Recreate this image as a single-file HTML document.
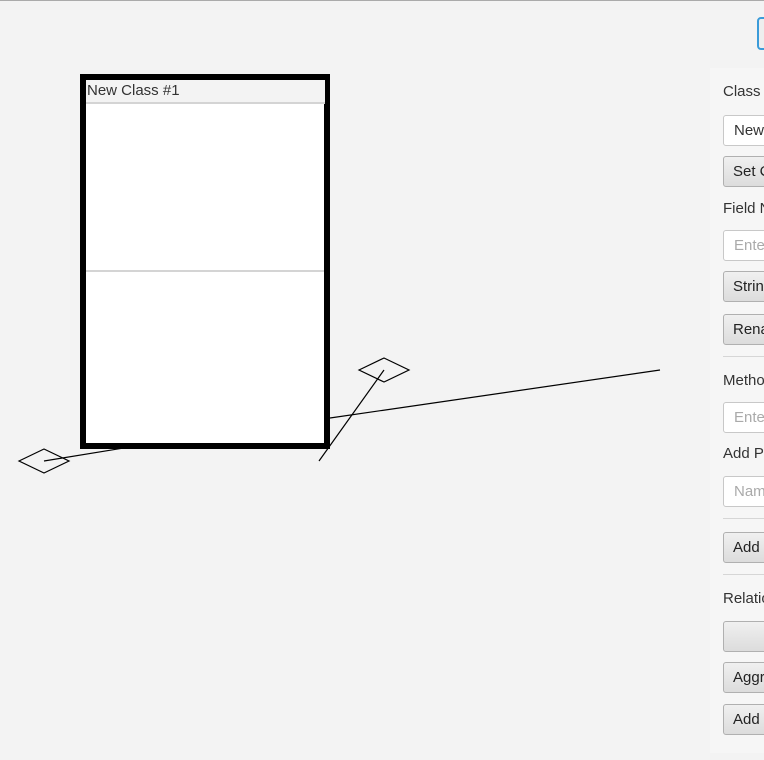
<html><head><style>
body{margin:0;width:764px;height:760px;background:#f3f3f3;position:relative;overflow:hidden;font-family:"Liberation Sans",sans-serif;font-size:15px;color:#333}
.a{position:absolute}
.tf{position:absolute;left:723px;width:60px;height:31px;background:#fff;border:1px solid #c8c8c8;border-radius:3px;box-sizing:border-box;padding:6px 0 0 10px;white-space:nowrap}
.bt{position:absolute;left:723px;width:60px;height:31px;background:linear-gradient(#f0f0f0,#dcdcdc);border:1px solid #b0b0b0;border-radius:3px;box-sizing:border-box;padding:6px 0 0 9px;white-space:nowrap;color:#222}
.lb{position:absolute;left:723px;white-space:nowrap}
.sp{position:absolute;left:723px;width:50px;height:1px;background:#d6d6d6}
</style></head><body>
<div class="a" style="left:0;top:0;width:764px;height:1px;background:#aaa"></div>
<div class="a" style="left:757px;top:17px;width:20px;height:33px;border:2px solid #3a9bd9;border-radius:4px;box-sizing:border-box;background:#eee"></div>
<div class="a" style="left:710px;top:68px;width:60px;height:685px;background:#f6f6f6"></div>
<div class="lb" style="top:83px">Class N</div>
<div class="tf" style="top:115px">New</div>
<div class="bt" style="top:156px">Set C</div>
<div class="lb" style="top:200px">Field N</div>
<div class="tf" style="top:230px;color:#aaa">Enter</div>
<div class="bt" style="top:271px">Strin</div>
<div class="bt" style="top:314px">Rena</div>
<div class="sp" style="top:356px"></div>
<div class="lb" style="top:372px">Metho</div>
<div class="tf" style="top:402px;color:#aaa">Enter</div>
<div class="lb" style="top:445px">Add P</div>
<div class="tf" style="top:476px;color:#aaa">Nam</div>
<div class="sp" style="top:518px"></div>
<div class="bt" style="top:532px">Add</div>
<div class="sp" style="top:574px"></div>
<div class="lb" style="top:590px">Relatio</div>
<div class="bt" style="top:621px"></div>
<div class="bt" style="top:662px">Aggr</div>
<div class="bt" style="top:704px">Add</div>
<div class="a" style="left:80px;top:74px;width:250px;height:375px;border:6px solid #000;box-sizing:border-box;background:#fff"></div>
<div class="a" style="left:86px;top:80px;width:238px;height:22px;background:#f3f3f3;border-bottom:2px solid #d4d4d4;padding-left:1px;line-height:22px;color:#333">New Class #1</div>
<div class="a" style="left:86px;top:270px;width:238px;height:2px;background:#d4d4d4"></div>
<svg class="a" style="left:0;top:0" width="764" height="760"><g stroke="#000" stroke-width="1.2" fill="none">
<line x1="44" y1="461" x2="130" y2="447"/>
<polygon points="19,461 44,449 69,461 44,473"/>
<line x1="330" y1="418" x2="660" y2="370"/>
<line x1="319" y1="461" x2="384" y2="370"/>
<polygon points="359,370 384,358 409,370 384,382"/>
</g></svg>
</body></html>
